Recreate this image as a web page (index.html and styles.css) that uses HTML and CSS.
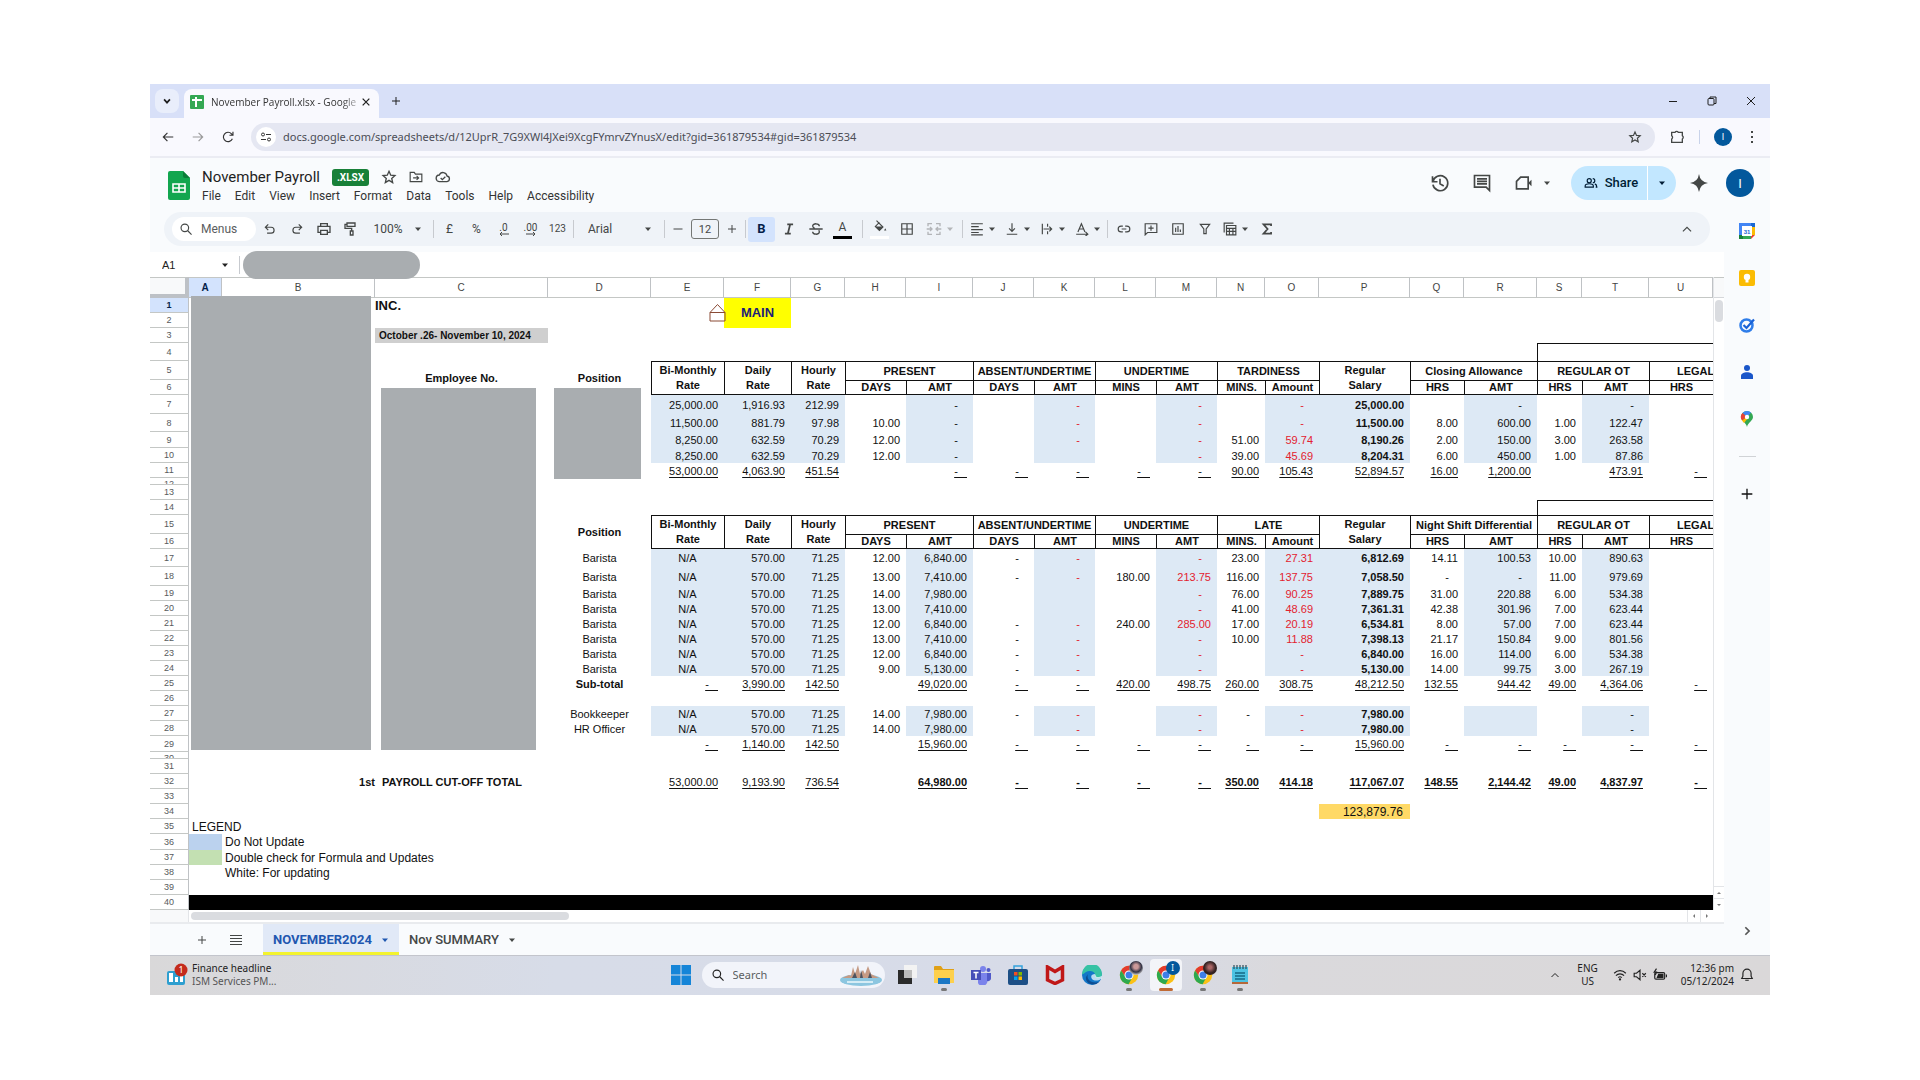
FILE: index.html
```html
<!DOCTYPE html>
<html lang="en">
<head>
<meta charset="utf-8">
<title>November Payroll.xlsx - Google Sheets</title>
<link rel="stylesheet" href="styles.css">
</head>
<body>
<svg class="defs" aria-hidden="true">
  <symbol id="caret" viewBox="0 0 8 8"><path d="M1 2.500h6l-3 3.500z" fill="currentColor"/></symbol>
  <symbol id="star" viewBox="0 0 24 24"><path d="M12 3.500l2.600 5.800 6.300.600-4.800 4.200 1.400 6.200-5.500-3.300-5.500 3.300 1.400-6.200-4.800-4.200 6.300-.600z"/></symbol>
  <symbol id="plus" viewBox="0 0 24 24"><path d="M12 4v16M4 12h16"/></symbol>
  <symbol id="up" viewBox="0 0 24 24"><path d="M5 16l7-7 7 7"/></symbol>
  <symbol id="search" viewBox="0 0 24 24"><circle cx="10" cy="10" r="6.500"/><path d="M15 15l6.500 6.500"/></symbol>
  <symbol id="chrome" viewBox="0 0 24 24">
    <circle cx="12" cy="12" r="11" fill="#fbc116"/>
    <path d="M2.500 6.500A11 11 0 0 1 21.500 6.500L12 7 7.700 14.500z" fill="#e33b2e"/>
    <path d="M2.500 6.500A11 11 0 0 0 11.500 23L16.300 14.500 12 17 7.700 14.500z" fill="#2da94f"/>
    <circle cx="12" cy="12" r="5.400" fill="#fff"/><circle cx="12" cy="12" r="4.200" fill="#3f7fe8"/>
  </symbol>
</svg>

<div class="window">
  <header class="tabstrip">
    <button class="tab-search" aria-label="Search tabs"><svg class="i10" viewBox="0 0 24 24"><path d="M5 8l7 8 7-8" stroke-width="4"/></svg></button>
    <div class="tab">
      <svg class="favicon" viewBox="0 0 14 14"><rect width="14" height="14" rx="1" fill="#34a853"/><path d="M2 5h10M6 2v10" stroke="#fff" stroke-width="2"/></svg>
      <span class="tab-title">November Payroll.xlsx - Google</span>
      <button class="tab-close" aria-label="Close tab"><svg class="i10" viewBox="0 0 24 24"><path d="M4 4l16 16M20 4L4 20" stroke-width="3"/></svg></button>
    </div>
    <button class="new-tab" aria-label="New tab"><svg class="i12"><use href="#plus"/></svg></button>
    <div class="controls">
      <button aria-label="Minimise"><svg class="i12" viewBox="0 0 12 12"><path d="M2 6.500h8" stroke-width="1"/></svg></button>
      <button aria-label="Restore"><svg class="i12" viewBox="0 0 12 12"><rect x="2" y="3.500" width="6" height="6.500" rx="1" stroke-width="1"/><path d="M4 3.500V2h6v6.500H8" stroke-width="1"/></svg></button>
      <button aria-label="Close"><svg class="i12" viewBox="0 0 12 12"><path d="M2 2l8 8M10 2l-8 8" stroke-width="1"/></svg></button>
    </div>
  </header>

  <nav class="navbar" aria-label="Browser">
    <button class="nav" aria-label="Back"><svg class="i14" viewBox="0 0 24 24"><path d="M21 12H4M11 5l-7 7 7 7"/></svg></button>
    <button class="nav off" aria-label="Forward"><svg class="i14" viewBox="0 0 24 24"><path d="M3 12h17M13 5l7 7-7 7"/></svg></button>
    <button class="nav" aria-label="Reload"><svg class="i14" viewBox="0 0 24 24"><path d="M19.500 15A8 8 0 1 1 18 6.500l2 2.500M20.500 3v6h-6"/></svg></button>
    <div class="omnibox">
      <span class="site"><svg class="i12" viewBox="0 0 24 24"><circle cx="6" cy="7" r="3"/><path d="M12 7h10M2 17h10"/><circle cx="18" cy="17" r="3"/></svg></span>
      <input class="url" aria-label="Address" value="docs.google.com/spreadsheets/d/12UprR_7G9XWl4JXei9XcgFYmrvZYnusX/edit?gid=361879534#gid=361879534">
      <button aria-label="Bookmark"><svg class="i14"><use href="#star"/></svg></button>
    </div>
    <button class="ext" aria-label="Extensions"><svg class="i16" viewBox="0 0 24 24"><path d="M4 5h5a3 3 0 0 1 5 0h6v5a3 3 0 0 1 0 5v5H4v-5a3 3 0 0 0 0-5z"/></svg></button>
    <span class="nav-sep"></span>
    <button class="avatar small" aria-label="Profile">I</button>
    <button class="dots" aria-label="Menu"><svg class="i14" viewBox="0 0 14 14"><path d="M6 1h2v2H6zM6 6h2v2H6zM6 11h2v2H6z" fill="currentColor" stroke="none"/></svg></button>
  </nav>

  <div class="dochead">
    <svg class="logo" viewBox="0 0 22 29"><path d="M2 0h13l7 7v20a2 2 0 0 1-2 2H2a2 2 0 0 1-2-2V2a2 2 0 0 1 2-2z" fill="#12a64f"/><path d="M15 0l7 7h-5a2 2 0 0 1-2-2z" fill="#0b7c38"/><path d="M5 13h12v8H5zM5 17h12M11 13v8" fill="none" stroke="#fff" stroke-width="1.600"/></svg>
    <div class="doc">
      <div class="doc-title">
        <h1>November Payroll</h1><span class="badge">.XLSX</span>
        <button aria-label="Star"><svg class="i16"><use href="#star"/></svg></button>
        <button aria-label="Move"><svg class="i14" viewBox="0 0 24 24"><path d="M2 4h7l2 3h11v13H2zM7 13.500h9M13 10l3.500 3.500L13 17"/></svg></button>
        <button aria-label="Saved to Drive"><svg class="i16" viewBox="0 0 24 24"><path d="M7 19a5 5 0 0 1-.500-10 6 6 0 0 1 11.500 1.500A4.300 4.300 0 0 1 18 19zM8.500 13.500l2.500 2.500 4.500-4.500"/></svg></button>
      </div>
      <div class="menus">
        <button>File</button><button>Edit</button><button>View</button><button>Insert</button><button>Format</button><button>Data</button><button>Tools</button><button>Help</button><button>Accessibility</button>
      </div>
    </div>
    <div class="doc-actions">
      <button aria-label="Version history"><svg class="i20" viewBox="0 0 24 24"><path d="M3.500 10.500A9 9 0 1 1 3.500 14M3 4v6.500h6M12 7v6l4.500 2.500"/></svg></button>
      <button aria-label="Comments"><svg class="i20" viewBox="0 0 24 24"><path d="M3 3h18v18l-4-4H3zM6 7h12M6 10h12M6 13h12"/></svg></button>
      <button class="meet" aria-label="Meet"><svg class="i20" viewBox="0 0 24 24"><path d="M8 5h9v14H3V10z"/><path d="M17 12l4-4v8z" fill="currentColor"/></svg><svg class="i8"><use href="#caret"/></svg></button>
      <div class="share"><button class="share-main"><svg class="i14" viewBox="0 0 24 24"><circle cx="9" cy="8" r="3.500"/><path d="M2 19v-2c0-5 14-5 14 0v2zM15 4.500a3.500 3.500 0 0 1 0 7M18.500 13.500c3 1 3.500 2 3.500 5.500h-2"/></svg>Share</button><button class="share-more" aria-label="Share options"><svg class="i8"><use href="#caret"/></svg></button></div>
      <button class="spark" aria-label="Gemini"><svg class="i18" viewBox="0 0 24 24"><path d="M12 0q1.500 10.500 12 12-10.500 1.500-12 12Q10.500 13.500 0 12 10.500 10.500 12 0z" fill="currentColor" stroke="none"/></svg></button>
      <button class="avatar" aria-label="Account">I</button>
    </div>
  </div>

  <div class="work">
    <main class="editor">
      <div class="toolbar">
        <label class="menu-search"><svg class="i14"><use href="#search"/></svg><input aria-label="Search the menus" placeholder="Menus"></label>
        <button class="tool" aria-label="Undo"><svg class="i14" viewBox="0 0 24 24"><path d="M9 4L4 9l5 5M4 9h10a5 5 0 0 1 0 10H7"/></svg></button>
        <button class="tool" aria-label="Redo"><svg class="i14" viewBox="0 0 24 24"><path d="M15 4l5 5-5 5M20 9H10a5 5 0 0 0 0 10h7"/></svg></button>
        <button class="tool" aria-label="Print"><svg class="i16" viewBox="0 0 24 24"><path d="M7 8V4h10v4M7 17H3V8h18v9h-4M7 14h10v6H7z"/></svg></button>
        <button class="tool" aria-label="Paint format"><svg class="i16" viewBox="0 0 24 24"><path d="M6 3h12v5H6zM6 5H3v6h10v4M11 15h4v6h-4z"/></svg></button>
        <button class="zoom">100%<svg class="i8"><use href="#caret"/></svg></button>
        <span class="sep"></span>
        <button class="tool">£</button><button class="tool">%</button><button class="tool dec">.0<svg viewBox="0 0 12 4"><path d="M11 2H2M4 0L2 2l2 2"/></svg></button><button class="tool dec">.00<svg viewBox="0 0 12 4"><path d="M1 2h9M8 0l2 2-2 2"/></svg></button><button class="tool num">123</button>
        <span class="sep"></span>
        <button class="font">Arial<svg class="i8"><use href="#caret"/></svg></button>
        <span class="sep"></span>
        <button class="step" aria-label="Decrease font size"><svg class="i12" viewBox="0 0 24 24"><path d="M3 12h18"/></svg></button>
        <input class="size" aria-label="Font size" value="12">
        <button class="step" aria-label="Increase font size"><svg class="i12"><use href="#plus"/></svg></button>
        <span class="sep"></span>
        <button class="tool on"><b>B</b></button>
        <button class="tool" aria-label="Italic"><svg class="i14" viewBox="0 0 24 24"><path d="M9 4h10M5 20h10M14 4l-4 16" stroke-width="3"/></svg></button>
        <button class="tool" aria-label="Strikethrough"><svg class="i16" viewBox="0 0 24 24"><path d="M2 12h20M17 8c0-5-10-5-10-.500 0 2 2 3 3 3.500M7 16c0 5 10 5 10 .500 0-1-.500-2-1-2.500"/></svg></button>
        <button class="tool ink">A</button>
        <span class="sep wide"></span>
        <button class="tool fill" aria-label="Fill colour"><svg class="i14" viewBox="0 0 24 24"><path d="M6 1l11 11-6 6-7-7 7-7"/><path d="M4 11h13l-6 7z" fill="currentColor"/><path d="M21 14l2 4h-4z" fill="currentColor"/></svg></button>
        <button class="tool" aria-label="Borders"><svg class="i14" viewBox="0 0 24 24"><path d="M3 3h18v18H3zM12 3v18M3 12h18"/></svg></button>
        <button class="tool pair off" aria-label="Merge cells"><svg class="i16" viewBox="0 0 24 24"><path d="M9 4H3v4M3 16v4h6M15 4h6v4M21 16v4h-6M1 12h8M6 9l3 3-3 3M23 12h-8M18 9l-3 3 3 3"/></svg><svg class="i8"><use href="#caret"/></svg></button>
        <span class="sep"></span>
        <button class="tool pair" aria-label="Horizontal align"><svg class="i14" viewBox="0 0 24 24"><path d="M2 3h20M2 8h13M2 13h20M2 18h13M2 22h20"/></svg><svg class="i8"><use href="#caret"/></svg></button>
        <button class="tool pair" aria-label="Vertical align"><svg class="i14" viewBox="0 0 24 24"><path d="M3 21h18M12 2v14M7 11l5 5 5-5"/></svg><svg class="i8"><use href="#caret"/></svg></button>
        <button class="tool pair" aria-label="Wrapping"><svg class="i14" viewBox="0 0 24 24"><path d="M4 3v18M13 3v5M13 16v5M6 12h14M16 8l4 4-4 4"/></svg><svg class="i8"><use href="#caret"/></svg></button>
        <button class="tool pair" aria-label="Rotation"><svg class="i14" viewBox="0 0 24 24"><path d="M5 17l6-14 6 14M7 12h8M2 21h19M18 17l4 4-4 3"/></svg><svg class="i8"><use href="#caret"/></svg></button>
        <span class="sep"></span>
        <button class="tool" aria-label="Link"><svg class="i14" viewBox="0 0 24 24"><path d="M10 7H7a5 5 0 0 0 0 10h3M14 7h3a5 5 0 0 1 0 10h-3M8 12h8"/></svg></button>
        <button class="tool" aria-label="Comment"><svg class="i14" viewBox="0 0 24 24"><path d="M2 22V3h20v15H6zM12 6v9M7.500 10.500h9"/></svg></button>
        <button class="tool" aria-label="Chart"><svg class="i14" viewBox="0 0 24 24"><path d="M3 3h18v18H3zM8 10v7M12 7v10M16 13v4"/></svg></button>
        <button class="tool" aria-label="Filter"><svg class="i14" viewBox="0 0 24 24"><path d="M4 4h16l-6 8v8h-4v-8z"/></svg></button>
        <button class="tool pair" aria-label="Table views"><svg class="i14" viewBox="0 0 24 24"><path d="M6 6h16v16H6zM6 11h16M6 16h16M11 11v11M17 11v11M2 18V2h16"/></svg><svg class="i8"><use href="#caret"/></svg></button>
        <button class="tool" aria-label="Functions"><svg class="i14" viewBox="0 0 24 24"><path d="M19 7V4H6l7 8-7 8h13v-3" stroke-width="3"/></svg></button>
        <button class="tool collapse" aria-label="Hide the menus"><svg class="i14"><use href="#up"/></svg></button>
      </div>

      <div class="formula">
        <label class="namebox"><input aria-label="Name box" value="A1"><svg class="i8"><use href="#caret"/></svg></label>
        <span class="redact"></span>
      </div>

      <div class="sheet">
        <div class="grid">
          <table>
            <colgroup><col class="w39"><col class="w33"><col class="w153"><col class="w173"><col class="w103"><col class="w73"><col class="w67"><col class="w54"><col class="w61"><col class="w67"><col class="w61"><col class="w61"><col class="w61"><col class="w61"><col class="w48"><col class="w54"><col class="w91"><col class="w54"><col class="w73"><col class="w45"><col class="w67"><col></colgroup>
            <thead>
            <tr><th class="corner"></th><th class="sel">A</th><th>B</th><th>C</th><th>D</th><th>E</th><th>F</th><th>G</th><th>H</th><th>I</th><th>J</th><th>K</th><th>L</th><th>M</th><th>N</th><th>O</th><th>P</th><th>Q</th><th>R</th><th>S</th><th>T</th><th>U</th></tr>
            </thead>
            <tbody>
            <tr><th class="sel">1<td><td><td class="company">INC.<td><td class="home"><svg viewBox="0 0 17 18"><path d="M1 8.500h15V17H1zM1 8.500l7.500-8 7.500 8"/></svg><td class="main" rowspan="2">MAIN<td colspan="15"></tr>
            <tr><th>2<td colspan="5"><td colspan="15"></tr>
            <tr><th>3<td><td><td class="period">October .26- November 10, 2024<td colspan="18"></tr>
            <tr class="h18"><th>4<td colspan="18"><td class="box" colspan="3"></tr>
            <tr class="h19 head"><th>5<td><td><td rowspan="2" class="who">Employee No.<td rowspan="2" class="who">Position<td rowspan="2" class="tall">Bi-Monthly<br>Rate<td rowspan="2" class="tall">Daily<br>Rate<td rowspan="2" class="tall">Hourly<br>Rate<td colspan="2">PRESENT<td colspan="2">ABSENT/UNDERTIME<td colspan="2">UNDERTIME<td colspan="2">TARDINESS<td rowspan="2" class="tall">Regular<br>Salary<td colspan="2">Closing Allowance<td colspan="2">REGULAR OT<td class="cut">LEGAL</tr>
            <tr class="head sub"><th>6<td><td><td>DAYS<td>AMT<td>DAYS<td>AMT<td>MINS<td>AMT<td>MINS.<td>Amount<td>HRS<td>AMT<td>HRS<td>AMT<td>HRS</tr>
            <tr class="h19 pay"><th>7<td><td><td><td><td>25,000.00<td>1,916.93<td>212.99<td><td>-   <td><td>-   <td><td>-   <td><td>-   <td>25,000.00<td><td>-   <td><td>-   <td></tr>
            <tr class="h18 pay"><th>8<td><td><td><td><td>11,500.00<td>881.79<td>97.98<td>10.00<td>-   <td><td>-   <td><td>-   <td><td>-   <td>11,500.00<td>8.00<td>600.00<td>1.00<td>122.47<td></tr>
            <tr class="h16 pay"><th>9<td><td><td><td><td>8,250.00<td>632.59<td>70.29<td>12.00<td>-   <td><td>-   <td><td>-   <td>51.00<td>59.74<td>8,190.26<td>2.00<td>150.00<td>3.00<td>263.58<td></tr>
            <tr class="pay"><th>10<td><td><td><td><td>8,250.00<td>632.59<td>70.29<td>12.00<td>-   <td><td><td><td>-   <td>39.00<td>45.69<td>8,204.31<td>6.00<td>450.00<td>1.00<td>87.86<td></tr>
            <tr class="sum"><th>11<td><td><td><td><td>53,000.00<td>4,063.90<td>451.54<td><td>-   <td>-   <td>-   <td>-   <td>-   <td>90.00<td>105.43<td>52,894.57<td>16.00<td>1,200.00<td><td>473.91<td>-   </tr>
            <tr class="h7"><th><div>12</div><td colspan="21"></tr>
            <tr><th>13<td colspan="21"></tr>
            <tr><th>14<td colspan="18"><td class="box" colspan="3"></tr>
            <tr class="h19 head"><th>15<td><td><td rowspan="2" class="who"><td rowspan="2" class="who">Position<td rowspan="2" class="tall">Bi-Monthly<br>Rate<td rowspan="2" class="tall">Daily<br>Rate<td rowspan="2" class="tall">Hourly<br>Rate<td colspan="2">PRESENT<td colspan="2">ABSENT/UNDERTIME<td colspan="2">UNDERTIME<td colspan="2">LATE<td rowspan="2" class="tall">Regular<br>Salary<td colspan="2">Night Shift Differential<td colspan="2">REGULAR OT<td class="cut">LEGAL</tr>
            <tr class="head sub"><th>16<td><td><td>DAYS<td>AMT<td>DAYS<td>AMT<td>MINS<td>AMT<td>MINS.<td>Amount<td>HRS<td>AMT<td>HRS<td>AMT<td>HRS</tr>
            <tr class="h18 pay crew"><th>17<td><td><td><td>Barista<td>N/A<td>570.00<td>71.25<td>12.00<td>6,840.00<td>-   <td>-   <td><td>-   <td>23.00<td>27.31<td>6,812.69<td>14.11<td>100.53<td>10.00<td>890.63<td></tr>
            <tr class="h19 pay crew"><th>18<td><td><td><td>Barista<td>N/A<td>570.00<td>71.25<td>13.00<td>7,410.00<td>-   <td>-   <td>180.00<td>213.75<td>116.00<td>137.75<td>7,058.50<td>-   <td>-   <td>11.00<td>979.69<td></tr>
            <tr class="pay crew"><th>19<td><td><td><td>Barista<td>N/A<td>570.00<td>71.25<td>14.00<td>7,980.00<td><td><td><td>-   <td>76.00<td>90.25<td>7,889.75<td>31.00<td>220.88<td>6.00<td>534.38<td></tr>
            <tr class="pay crew"><th>20<td><td><td><td>Barista<td>N/A<td>570.00<td>71.25<td>13.00<td>7,410.00<td><td><td><td>-   <td>41.00<td>48.69<td>7,361.31<td>42.38<td>301.96<td>7.00<td>623.44<td></tr>
            <tr class="pay crew"><th>21<td><td><td><td>Barista<td>N/A<td>570.00<td>71.25<td>12.00<td>6,840.00<td>-   <td>-   <td>240.00<td>285.00<td>17.00<td>20.19<td>6,534.81<td>8.00<td>57.00<td>7.00<td>623.44<td></tr>
            <tr class="pay crew"><th>22<td><td><td><td>Barista<td>N/A<td>570.00<td>71.25<td>13.00<td>7,410.00<td>-   <td>-   <td><td>-   <td>10.00<td>11.88<td>7,398.13<td>21.17<td>150.84<td>9.00<td>801.56<td></tr>
            <tr class="pay crew"><th>23<td><td><td><td>Barista<td>N/A<td>570.00<td>71.25<td>12.00<td>6,840.00<td>-   <td>-   <td><td>-   <td><td>-   <td>6,840.00<td>16.00<td>114.00<td>6.00<td>534.38<td></tr>
            <tr class="pay crew"><th>24<td><td><td><td>Barista<td>N/A<td>570.00<td>71.25<td>9.00<td>5,130.00<td>-   <td>-   <td><td>-   <td><td>-   <td>5,130.00<td>14.00<td>99.75<td>3.00<td>267.19<td></tr>
            <tr class="sum"><th>25<td><td><td><td>Sub-total<td>-   <td>3,990.00<td>142.50<td><td>49,020.00<td>-   <td>-   <td>420.00<td>498.75<td>260.00<td>308.75<td>48,212.50<td>132.55<td>944.42<td>49.00<td>4,364.06<td>-   </tr>
            <tr><th>26<td colspan="21"></tr>
            <tr class="pay"><th>27<td><td><td><td>Bookkeeper<td class="mid">N/A<td>570.00<td>71.25<td>14.00<td>7,980.00<td>-   <td>-   <td><td>-   <td>-   <td>-   <td>7,980.00<td><td><td><td>-   <td></tr>
            <tr class="pay"><th>28<td><td><td><td>HR Officer<td class="mid">N/A<td>570.00<td>71.25<td>14.00<td>7,980.00<td><td>-   <td><td>-   <td><td>-   <td>7,980.00<td><td><td><td>-   <td></tr>
            <tr class="h16 sum"><th>29<td><td><td><td><td>-   <td>1,140.00<td>142.50<td><td>15,960.00<td>-   <td>-   <td>-   <td>-   <td>-   <td>-   <td>15,960.00<td>-   <td>-   <td>-   <td>-   <td>-   </tr>
            <tr class="h7"><th><div>30</div><td colspan="21"></tr>
            <tr><th>31<td colspan="21"></tr>
            <tr class="sum total"><th>32<td><td>1st<td>PAYROLL CUT-OFF TOTAL<td><td>53,000.00<td>9,193.90<td>736.54<td><td>64,980.00<td>-   <td>-   <td>-   <td>-   <td>350.00<td>414.18<td>117,067.07<td>148.55<td>2,144.42<td>49.00<td>4,837.97<td>-   </tr>
            <tr><th>33<td colspan="21"></tr>
            <tr><th>34<td colspan="15"><td class="grand">123,879.76<td colspan="5"></tr>
            <tr class="legend"><th>35<td colspan="2">LEGEND<td colspan="19"></tr>
            <tr class="h16 legend"><th>36<td class="blue"><td colspan="2">Do Not Update<td colspan="18"></tr>
            <tr class="legend"><th>37<td class="green"><td colspan="2">Double check for Formula and Updates<td colspan="18"></tr>
            <tr class="legend"><th>38<td><td colspan="2">White: For updating<td colspan="18"></tr>
            <tr><th>39<td colspan="21"></tr>
            <tr><th>40<td class="black" colspan="21"></tr>
            </tbody>
          </table>
          <span class="mask names"></span><span class="mask numbers"></span><span class="mask roles"></span>
        </div>
        <div class="vbar"><i class="vhead"></i><i class="vthumb"></i><button aria-label="Scroll up"><svg class="i6" viewBox="0 0 6 6"><path d="M1 4h4L3 2z"/></svg></button><button aria-label="Scroll down"><svg class="i6" viewBox="0 0 6 6"><path d="M1 2h4L3 4z"/></svg></button></div>
      </div>
      <div class="hbar"><i class="hhead"></i><i class="hthumb"></i><button aria-label="Scroll left"><svg class="i6" viewBox="0 0 6 6"><path d="M4 1v4L2 3z"/></svg></button><button aria-label="Scroll right"><svg class="i6" viewBox="0 0 6 6"><path d="M2 1v4l2-2z"/></svg></button></div>
      <div class="sheets">
        <button class="sheet-tool" aria-label="Add sheet"><svg class="i12"><use href="#plus"/></svg></button>
        <button class="sheet-tool" aria-label="All sheets"><svg class="i12" viewBox="0 0 12 12"><path d="M0 1.500h12M0 4.500h12M0 7.500h12M0 10.500h12" stroke-width="1"/></svg></button>
        <button class="sheet-tab current">NOVEMBER2024<svg class="i8"><use href="#caret"/></svg></button>
        <button class="sheet-tab">Nov SUMMARY<svg class="i8"><use href="#caret"/></svg></button>
      </div>
    </main>

    <aside class="side">
      <button aria-label="Calendar"><svg class="i16" viewBox="0 0 16 16"><path d="M0 0h12v4H4v8H0z" fill="#4285f4"/><path d="M12 0h4v4h-4z" fill="#1967d2"/><path d="M12 4h4v8h-4z" fill="#fbbc04"/><path d="M4 12h8v4H4z" fill="#34a853"/><path d="M0 12h4v4H0z" fill="#188038"/><path d="M12 12h4l-4 4z" fill="#ea4335"/><path d="M3 3h10v10H3z" fill="#fff"/><text x="8" y="11" text-anchor="middle" class="cal">31</text></svg></button>
      <button aria-label="Keep"><svg class="i16" viewBox="0 0 16 16"><rect width="16" height="16" rx="2" fill="#fbbc04"/><circle cx="8" cy="7" r="3.200" fill="#fff"/><path d="M6.500 10h3v2.500h-3z" fill="#fff"/></svg></button>
      <button aria-label="Tasks"><svg class="i16" viewBox="0 0 16 16"><circle cx="7.500" cy="8.500" r="6" fill="none" stroke="#2f7de9" stroke-width="2.500"/><path d="M4.500 8l3 3L15 2.500" fill="none" stroke="#1a62d6" stroke-width="2.200"/></svg></button>
      <button aria-label="Contacts"><svg class="i16" viewBox="0 0 16 16"><circle cx="8" cy="4" r="3" fill="#1a56c9"/><path d="M2 15v-3c0-5 12-5 12 0v3z" fill="#1a56c9"/></svg></button>
      <button aria-label="Maps"><svg class="i16" viewBox="0 0 16 16"><path d="M8 0a6 6 0 0 0-6 6c0 4 5 5 6 10 1-5 6-6 6-10a6 6 0 0 0-6-6z" fill="#34a853"/><path d="M8 0a6 6 0 0 0-4.500 2L8 6l4-4.500A6 6 0 0 0 8 0z" fill="#4285f4"/><path d="M3.500 2A6 6 0 0 0 3 9.500L8 6z" fill="#ea4335"/><path d="M3 9.500l2 2.500 4-5-1-1z" fill="#fbbc04"/><circle cx="8" cy="6" r="2.200" fill="#fff"/></svg></button>
      <hr>
      <button aria-label="Get add-ons"><svg class="i16 dark"><use href="#plus"/></svg></button>
      <button class="side-toggle" aria-label="Hide side panel"><svg class="i10" viewBox="0 0 24 24"><path d="M8 3l9 9-9 9" stroke-width="4"/></svg></button>
    </aside>
  </div>

  <footer class="taskbar">
    <div class="news">
      <svg viewBox="0 0 22 24"><rect x="1" y="8" width="18" height="14" rx="2" fill="#2e9fd0"/><path d="M3 10h4v9H3zM9 14h3v5H9zM14 12h3v7h-3z" fill="#fff"/><circle cx="15" cy="7" r="6.500" fill="#c42b1c"/><text x="15" y="10" text-anchor="middle" class="count">1</text></svg>
      <p>Finance headline<br><span>ISM Services PM...</span></p>
    </div>
    <div class="apps">
      <button class="app" aria-label="Start"><svg class="i20" viewBox="0 0 20 20"><path d="M0 0h9.500v9.500H0zM10.500 0H20v9.500h-9.500zM0 10.500h9.500V20H0zM10.500 10.500H20V20h-9.500z" fill="#1585d8"/></svg></button>
      <label class="find"><svg class="i14"><use href="#search"/></svg><input aria-label="Search" placeholder="Search"><svg class="art" viewBox="0 0 44 24"><ellipse cx="22" cy="17" rx="21" ry="6" fill="#8cc6e0"/><path d="M3 15l7-3 2 1 2-9 2 7 3-9 2 9 3-4 2 4 3-8 3 8 8 4z" fill="#c59a84"/><path d="M13 15l3-6 2 6zM21 15l1-8 2 8zM29 15l2-6 2 6z" fill="#4d5360"/><path d="M8 19h26" stroke="#d5ecf5"/></svg></label>
      <button class="app" aria-label="Task view"><svg class="i20" viewBox="0 0 20 20"><path d="M7 0h13v13H7z" fill="#f3f3f3"/><path d="M1 5h14v14H1z" fill="#2b2b2b"/><path d="M7 5h8v8H7z" fill="#bdbdbd"/></svg></button>
      <button class="app open" aria-label="File Explorer"><svg class="i20" viewBox="0 0 20 20"><path d="M0 2a1 1 0 0 1 1-1h6l2 3h11v14H0z" fill="#e0a016"/><path d="M0 5h20v13H0z" fill="#fdd04d"/><path d="M4 13h12v6H4z" fill="#1b77c5"/></svg></button>
      <button class="app" aria-label="Teams"><svg class="i20" viewBox="0 0 20 20"><circle cx="12" cy="4" r="3" fill="#7b83eb"/><circle cx="17.500" cy="5" r="2" fill="#5059c9"/><path d="M7 8h9v6a4.500 4.500 0 0 1-9 4z" fill="#7b83eb"/><path d="M16 8h4v5a3 3 0 0 1-4 3z" fill="#5059c9"/><path d="M0 5h10v10H0z" fill="#464eb8"/><path d="M2.500 7.500h5M5 7.500v6" stroke="#fff" stroke-width="1.500"/></svg></button>
      <button class="app" aria-label="Store"><svg class="i20" viewBox="0 0 20 20"><path d="M6 5V1h8v4" fill="none" stroke="#36a3dc" stroke-width="1.500"/><rect y="4" width="20" height="16" rx="2" fill="#1d4f86"/><path d="M6 7h3.500v3.500H6z" fill="#f25022"/><path d="M10.500 7H14v3.500h-3.500z" fill="#7fba00"/><path d="M6 11.500h3.500V15H6z" fill="#00a4ef"/><path d="M10.500 11.500H14V15h-3.500z" fill="#ffb900"/></svg></button>
      <button class="app" aria-label="McAfee"><svg class="i20" viewBox="0 0 20 20"><path d="M2.500 2l7.500 4.500L17.500 2v13L10 18.500 2.500 15z" fill="none" stroke="#c01818" stroke-width="3.500"/></svg></button>
      <button class="app" aria-label="Edge"><svg class="i20" viewBox="0 0 20 20"><circle cx="10" cy="10" r="10" fill="#1377c8"/><path d="M0 9a10 10 0 0 1 20 0c0 6-8 5-7 2 1-5-6-6-9-4-2 1-3 3-4 2z" fill="#36c2a4"/><path d="M6 9c-2 5 3 10 11 8-5 5-14 2-13-5z" fill="#0d4d92"/><path d="M13 9c-3 0-5 2-3 5 2 2 6 2 9 0l2 1V9c-1 3-7 4-7 2z" fill="#e3f2fa" opacity=".8"/></svg></button>
      <button class="app open" aria-label="Chrome, profile 1"><svg class="i20"><use href="#chrome"/></svg><i class="who1"></i></button>
      <button class="app open active" aria-label="Chrome, profile 2"><svg class="i20"><use href="#chrome"/></svg><i class="who2">I</i></button>
      <button class="app open" aria-label="Chrome, profile 3"><svg class="i20"><use href="#chrome"/></svg><i class="who3"></i></button>
      <button class="app open" aria-label="Notepad"><svg class="i20" viewBox="0 0 20 20"><path d="M2 2h16v16H2z" fill="#4cc3e3"/><path d="M2 17h16v2H2z" fill="#b5683a"/><path d="M4 0v4M7 0v4M10 0v4M13 0v4M16 0v4" stroke="#2d4b59" stroke-width="1.200"/><path d="M5 8h10M5 11h10M5 14h10" stroke="#146a86" stroke-width="1.300"/></svg></button>
    </div>
    <div class="tray">
      <svg class="i12"><use href="#up"/></svg>
      <p class="lang">ENG<br>US</p>
      <svg class="i14" viewBox="0 0 24 24"><path d="M2 9c6-6 14-6 20 0M5 13c4-4 10-4 14 0M9 16.500c2-2 4-2 6 0"/><circle cx="12" cy="19.500" r="1"/></svg>
      <svg class="i14" viewBox="0 0 24 24"><path d="M2 9h4l6-5v16l-6-5H2zM16 9l6 6M22 9l-6 6"/></svg>
      <svg class="i14" viewBox="0 0 24 24"><rect x="3" y="8" width="17" height="11" rx="2" stroke="#222"/><path d="M9 10h9v7H6z" fill="#222"/><path d="M23 11v5M6 1L2 7h4l-2 5"/></svg>
      <p class="clock">12:36 pm<br>05/12/2024</p>
      <svg class="i14" viewBox="0 0 24 24"><path d="M3 18l2-4V9a7 7 0 0 1 14 0v5l2 4zM9 21h6"/></svg>
    </div>
  </footer>
</div>
</body>
</html>
```
FILE: styles.css
```css
* { box-sizing: border-box; }
body { margin: 0; padding: 84px 150px; background: #fff; font-family: Roboto, "Liberation Sans", sans-serif; color: #444746; }
button, input { margin: 0; padding: 0; border: 0; background: none; font: inherit; color: inherit; outline: 0; }
button { display: flex; align-items: center; justify-content: center; flex: none; white-space: nowrap; }
input { min-width: 0; }
p, h1 { margin: 0; }
svg { display: block; flex: none; fill: none; stroke: currentColor; stroke-width: 2; }
.defs { position: absolute; width: 0; height: 0; }
symbol path[fill], svg [fill]:not([stroke]):not([fill="none"]) { stroke: none; }
.i6 { width: 6px; height: 6px; fill: #777; stroke: none; }
.i8 { width: 8px; height: 8px; stroke: none; }
.i10 { width: 10px; height: 10px; }
.i12 { width: 12px; height: 12px; }
.i14 { width: 14px; height: 14px; }
.i16 { width: 16px; height: 16px; }
.i18 { width: 18px; height: 18px; }
.i20 { width: 20px; height: 20px; }
.dark { color: #111; }

.window { background: #f9fbfd; }

/* Browser chrome */
.tabstrip { display: flex; align-items: flex-end; height: 34px; padding-left: 5px; background: #d8e0f8; color: #1f1f1f; }
.tab-search { width: 24px; height: 24px; margin-bottom: 5px; border-radius: 8px; background: #e9eefb; }
.tab { display: flex; align-items: center; width: 195px; height: 29px; margin-left: 5px; padding: 0 6px 4px; border-radius: 8px 8px 0 0; background: #f9f9fe; }
.favicon { width: 14px; height: 14px; }
.tab-title { flex: 1; margin-left: 7px; white-space: nowrap; font: 10px/14px "Open Sans", sans-serif; color: #333; -webkit-mask-image: linear-gradient(90deg, #000 88%, #0004); mask-image: linear-gradient(90deg, #000 88%, #0004); }
.tab-close { width: 14px; height: 14px; }
.new-tab { width: 24px; height: 34px; margin-left: 5px; }
.controls { display: flex; gap: 15px; margin-left: auto; padding-right: 7px; }
.controls button { width: 24px; height: 34px; }
.navbar { display: flex; align-items: center; height: 40px; padding: 2px 11px 2px 3px; border-bottom: 2px solid #ebecf3; background: #f9f9fe; }
.nav { width: 30px; height: 28px; color: #333; }
.nav.off { color: #999; }
.omnibox { display: flex; align-items: center; flex: 1; height: 28px; margin-left: 8px; padding: 0 13px 0 5px; border-radius: 14px; background: #e5e7f2; }
.site { display: flex; align-items: center; justify-content: center; width: 20px; height: 20px; border-radius: 50%; background: #fff; color: #333; }
.url { flex: 1; margin-left: 7px; font: 11px/16px "Noto Sans", sans-serif; color: #4b4d55; }
.ext { margin-left: 14px; }
.nav-sep { width: 1px; height: 14px; margin: 0 14px; background: #c9d3ea; }
.avatar { width: 28px; height: 28px; border-radius: 50%; background: #03589c; color: #fff; font-size: 13px; }
.avatar.small { width: 18px; height: 18px; font-size: 9px; }
.dots { margin-left: 13px; }

/* Document header */
.dochead { display: flex; align-items: flex-start; height: 54px; padding: 8px 16px 0 18px; }
.logo { width: 22px; height: 29px; margin-top: 5px; stroke: none; }
.doc { margin-left: 12px; }
.doc-title { display: flex; align-items: center; height: 22px; gap: 12px; }
.doc-title h1 { font: 400 15px/20px Roboto, sans-serif; color: #1f1f1f; }
.badge { padding: 0 5px; border-radius: 3px; background: #188038; color: #fff; font: 700 10px/17px Roboto, sans-serif; }
.menus { display: flex; gap: 14px; font: 12px/16px Roboto, sans-serif; color: #333; }
.doc-actions { display: flex; align-items: center; height: 34px; margin-left: auto; }
.doc-actions > button + button { margin-left: 22px; }
.meet { gap: 9px; }
.share { display: flex; height: 34px; margin-left: 20px; border-radius: 17px; overflow: hidden; background: #c2e7ff; color: #001d35; }
.share-main { width: 77px; gap: 7px; font: 500 13px/16px Roboto, sans-serif; border-right: 1px solid #fff; padding-left: 4px; }
.share-more { width: 28px; }
.doc-actions .spark { margin-left: 14px; }
.doc-actions .spark + .avatar { margin-left: 18px; }

/* Editor */
.work { display: flex; }
.editor { flex: 1; min-width: 0; }
.toolbar { display: flex; align-items: center; height: 34px; margin: 0 14px 6px; padding: 0 10px 0 8px; border-radius: 17px; background: #eff3f8; font: 12px/16px Roboto, sans-serif; }
.menu-search { display: flex; align-items: center; flex: none; width: 84px; height: 24px; padding-left: 7px; gap: 8px; border-radius: 12px; background: #fff; }
.menu-search input { width: 48px; }
input::placeholder { color: #5a5d60; opacity: 1; }
.tool { width: 27px; height: 25px; border-radius: 3px; }
.zoom { width: 67px; gap: 11px; }
.dec { flex-direction: column; font-size: 10px; line-height: 9px; }
.dec svg { width: 12px; height: 4px; stroke-width: 1; }
.num { font-size: 10px; }
.font { width: 86px; padding: 0 10px 0 12px; justify-content: space-between; }
.sep { flex: none; width: 1px; height: 18px; margin: 0 2px; background: #c7cacf; }
.sep.wide { margin: 0 3px 0 6px; }
.step { width: 22px; height: 25px; }
.size { width: 28px; height: 20px; margin: 0 2px; border: 1px solid #747775; border-radius: 3px; text-align: center; font-size: 11px; }
.on { background: #d3e3fd; color: #041e49; font-size: 13px; }
.ink, .fill { position: relative; padding-bottom: 5px; }
.ink::after, .fill::after { content: ""; position: absolute; left: 4px; right: 4px; bottom: 3px; height: 3px; background: #000; }
.fill::after { background: #fff; }
.off { color: #b3b5b8; }
.pair { width: 35px; gap: 4px; }
.pair.off { width: 40px; }
.collapse { margin-left: auto; }
.formula { display: flex; align-items: center; height: 25px; background: #fff; }
.namebox { display: flex; align-items: center; width: 90px; height: 18px; padding: 0 10px 0 12px; border-right: 1px solid #c7cacf; font: 11px/14px "Liberation Sans", sans-serif; color: #222; }
.namebox input { flex: 1; }
.redact { width: 177px; height: 28px; margin: -2px 0 -2px 3px; border-radius: 14px; background: #a9adb0; position: relative; z-index: 2; }

/* Spreadsheet grid */
.sheet { display: flex; background: #fff; }
.grid { position: relative; flex: 1; min-width: 0; overflow: hidden; }
table { width: 100%; table-layout: fixed; border-collapse: separate; border-spacing: 0; color: #111; font: 11px/13px "Liberation Sans", Arial, sans-serif; }
.w33 { width: 33px; } .w39 { width: 39px; } .w45 { width: 45px; } .w48 { width: 48px; } .w54 { width: 54px; }
.w61 { width: 61px; } .w67 { width: 67px; } .w73 { width: 73px; } .w91 { width: 91px; } .w103 { width: 103px; }
.w153 { width: 153px; } .w173 { width: 173px; }
th, td { padding: 0; height: 15px; white-space: pre; text-align: right; }
th { border-right: 1px solid #bfc2c5; border-bottom: 1px solid #c4c7c5; background: #fff; color: #575a5c; font: 400 9px/12px "Liberation Sans", sans-serif; text-align: center; }
thead th { height: 21px; border-top: 1px solid #c4c7c5; font-size: 10px; color: #444; }
th.corner { border-right: 4px solid #bdc1c6; border-bottom: 4px solid #bdc1c6; background: #f8f9fa; }
th.sel { background: #d3e3fd; color: #041e49; font-weight: 700; }
.h7 th, .h7 td { height: 7px; line-height: 0; }
.h7 div { height: 6px; line-height: 12px; overflow: hidden; }
.h16 > * { height: 16px; }
.h18 > * { height: 18px; }
.h19 > * { height: 19px; }
.pay td, .sum td { padding: 1px 6px 0 0; }
.pay td:nth-child(5), .sum td:nth-child(5) { padding-right: 0; text-align: center; }
.pay td:nth-child(6), .pay td:nth-child(7), .pay td:nth-child(8), .pay td:nth-child(10), .pay td:nth-child(12), .pay td:nth-child(14), .pay td:nth-child(16), .pay td:nth-child(17), .pay td:nth-child(19), .pay td:nth-child(21) { background: #dde9f5; }
.pay td:nth-child(12), .pay td:nth-child(14), .pay td:nth-child(16) { color: #e3222f; }
.pay td:nth-child(17) { font-weight: 700; }
.crew td:nth-child(6), .pay td.mid { padding-right: 0; text-align: center; }
.sum td { text-decoration: underline; text-underline-offset: 2px; }
.sum td:nth-child(5) { font-weight: 700; text-decoration: none; }
.total td:nth-child(n+10) { font-weight: 700; }
.total td:nth-child(3), .total td:nth-child(4) { padding-right: 0; font-weight: 700; text-decoration: none; }
.total td:nth-child(4) { padding-left: 7px; text-align: left; }
td.company { font: 700 13px/15px "Liberation Sans", sans-serif; text-align: left; }
td.period { padding-left: 4px; background: #cfcfcf; font-weight: 700; font-size: 10px; text-align: left; }
td.main { background: #ff0; color: #1c1c78; font: 700 13px/16px "Liberation Sans", sans-serif; text-align: center; }
td.home { position: relative; }
.home svg { position: absolute; left: 58px; top: 6px; width: 17px; height: 18px; stroke: #8a4a35; stroke-width: 1; z-index: 1; }
td.box { border-top: 1px solid #111; border-left: 1px solid #111; }
.head td { font-weight: 700; text-align: center; border-top: 1px solid #111; border-left: 1px solid #111; }
.head td:nth-child(2), .head td:nth-child(3), .head td.who { border: 0; }
.head td.tall { border-bottom: 1px solid #111; line-height: 15px; }
.sub td:nth-child(n+4) { border-bottom: 1px solid #111; }
.head td.cut { padding-left: 27px; text-align: left; }
td.grand { padding: 1px 7px 0 0; background: #ffd966; }
td.grand, .legend td { font: 12px/13px "Liberation Sans", sans-serif; }
.legend td { padding: 1px 0 0 3px; text-align: left; }
.legend .blue { background: #bbd2ee; }
.legend .green { background: #c3e0b2; }
td.black { background: #000; }
.mask { position: absolute; background: #a9adb0; }
.names { left: 41px; top: 19px; width: 180px; height: 454px; }
.numbers { left: 231px; top: 111px; width: 155px; height: 362px; }
.roles { left: 404px; top: 111px; width: 87px; height: 91px; }

.vbar { display: flex; flex-direction: column; flex: none; width: 11px; border-left: 1px solid #e3e5e8; }
.vhead { height: 21px; border-top: 1px solid #c4c7c5; border-bottom: 1px solid #d5d7da; background: #f8f9fa; }
.vthumb { width: 8px; height: 22px; margin: 2px 1px auto; border-radius: 4px; background: #dadce0; }
.vbar button { height: 12px; border-top: 1px solid #e3e5e8; }
.hbar { display: flex; align-items: center; height: 14px; padding-right: 11px; border-bottom: 2px solid #e9ebee; background: #fff; }
.hhead { width: 39px; height: 12px; border-right: 1px solid #e3e5e8; background: #f8f9fa; }
.hthumb { width: 378px; height: 8px; margin: 0 auto 0 2px; border-radius: 4px; background: #dadce0; }
.hbar button { width: 13px; height: 12px; border-left: 1px solid #e3e5e8; }
.sheets { display: flex; align-items: center; height: 31px; padding-left: 35px; font: 500 13px/16px Roboto, sans-serif; }
.sheet-tool { width: 34px; height: 28px; }
.sheet-tab { height: 31px; padding: 0 10px; gap: 9px; }
.sheet-tool + .current { margin-left: 10px; }
.current { border-bottom: 3px solid #f3f32e; background: #e1e9f7; color: #1f57b0; font-weight: 700; }
.sheet-tab.current { padding-top: 3px; }

.side { display: flex; flex-direction: column; align-items: center; flex: none; width: 46px; padding-top: 11px; gap: 31px; }
.side hr { width: 17px; height: 1px; margin: -2px 0 -2px; border: 0; background: #d0d3d6; }
.side button { height: 16px; }
.side-toggle { margin: auto 0 16px; color: #555; }
.cal { font: 700 6px "Liberation Sans", sans-serif; fill: #1967d2; stroke: none; }

/* Windows taskbar */
.taskbar { display: grid; grid-template-columns: 1fr auto 1fr; align-items: center; height: 40px; padding-bottom: 2px; border-top: 1px solid #c3c5cc; background: linear-gradient(90deg, #d9d8d9 0%, #d7dce8 25%, #d7dbe8 60%, #dad9dc 70%, #dad8d9 100%); color: #222; font: 10px/13px "Noto Sans", sans-serif; }
.news { display: flex; align-items: center; gap: 4px; padding-left: 16px; }
.news svg { width: 22px; height: 24px; stroke: none; }
.news span { color: #555; }
.count { font: 9px "Noto Sans", sans-serif; fill: #fff; stroke: none; }
.apps { display: flex; align-items: center; gap: 5px; }
.app { position: relative; width: 32px; height: 32px; border-radius: 4px; }
.app svg { stroke: none; }
.find { display: flex; align-items: center; width: 183px; height: 26px; margin-right: 1px; padding: 0 2px 0 9px; border-radius: 13px; background: #f2f4fa; }
.find svg { stroke: #222; }
.find .art { width: 44px; height: 24px; stroke: none; }
.find input { flex: 1; margin-left: 8px; font-size: 11px; }
.open::after { content: ""; position: absolute; left: 13px; bottom: 0; width: 6px; height: 3px; border-radius: 2px; background: #777; }
.active { background: #f3f4f8; }
.active::after { left: 9px; width: 14px; background: #c06a35; }
.app i { position: absolute; right: 2px; top: 2px; width: 14px; height: 14px; border-radius: 50%; font: 8px/14px "Noto Sans", sans-serif; color: #fff; }
.who1 { background: radial-gradient(circle at 50% 40%, #c99 20%, #334 50%, #ddd 80%); }
.who2 { background: #03589c; }
.who3 { background: radial-gradient(circle at 50% 45%, #a66 15%, #322 55%); }
.tray { display: flex; align-items: center; justify-content: flex-end; gap: 6px; padding-right: 16px; text-align: center; }
.tray .lang { margin: 0 9px 0 10px; }
.tray .clock { margin-left: 8px; text-align: right; }
```
